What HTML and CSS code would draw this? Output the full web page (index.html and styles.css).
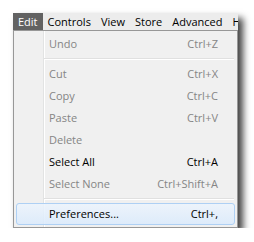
FILE: index.html
```html
<!DOCTYPE html>
<html>
<head>
    <meta charset="UTF-8">
    <title>Edit menu</title>
    <link rel="stylesheet" href="styles.css">
</head>
<body>
    <div class="window">
        <div class="menubar">
            <span class="bar-item active">Edit</span>
            <span class="bar-item">Controls</span>
            <span class="bar-item">View</span>
            <span class="bar-item">Store</span>
            <span class="bar-item">Advanced</span>
            <span class="bar-item">H</span>
        </div>
        <div class="menu">
            <div class="item disabled"><span>Undo</span><span>Ctrl+Z</span></div>
            <div class="sep"></div>
            <div class="item disabled"><span>Cut</span><span>Ctrl+X</span></div>
            <div class="item disabled"><span>Copy</span><span>Ctrl+C</span></div>
            <div class="item disabled"><span>Paste</span><span>Ctrl+V</span></div>
            <div class="item disabled"><span>Delete</span><span></span></div>
            <div class="item"><span>Select All</span><span>Ctrl+A</span></div>
            <div class="item disabled"><span>Select None</span><span>Ctrl+Shift+A</span></div>
            <div class="sep"></div>
            <div class="item hover"><span>Preferences...</span><span>Ctrl+,</span></div>
        </div>
    </div>
</body>
</html>
```

FILE: styles.css
```css
body {
    margin: 0;
    background: #ffffff;
    font-family: "Open Sans", "Noto Sans", sans-serif;
    font-size: 11px;
    color: #000000;
}

.window {
    margin: 13px 0 0 13px;
    width: 225px;
    box-shadow: 5px 5px 7px rgba(0, 0, 0, 0.75);
}

.menubar {
    display: flex;
    height: 17px;
    background: #ececec;
    white-space: nowrap;
    overflow: hidden;
}

.bar-item {
    padding: 0 5px;
    line-height: 17px;
}

.bar-item.active {
    background: #626262;
    color: #ffffff;
}

.menu {
    border: 1px solid #979797;
    padding: 2px;
    background: linear-gradient(to right, #f0f0f0 29px, #e2e3e3 29px 30px, #ffffff 30px 31px, #f0f0f0 31px);
}

.item {
    display: flex;
    justify-content: space-between;
    height: 22px;
    line-height: 22px;
    padding: 0 17px 0 33px;
}

.item.disabled {
    color: #858585;
}

.item.hover {
    border: 1px solid #aed0f4;
    border-radius: 3px;
    height: 20px;
    line-height: 20px;
    padding: 0 16px 0 32px;
    background: linear-gradient(to bottom, rgba(236, 244, 253, 0.85), rgba(218, 234, 252, 0.85));
}

.sep {
    height: 8px;
    margin-left: 28px;
    margin-right: 1px;
    display: flex;
    flex-direction: column;
    justify-content: center;
}

.sep::before {
    content: "";
    border-top: 1px solid #e0e0e0;
    border-bottom: 1px solid #ffffff;
}
```
